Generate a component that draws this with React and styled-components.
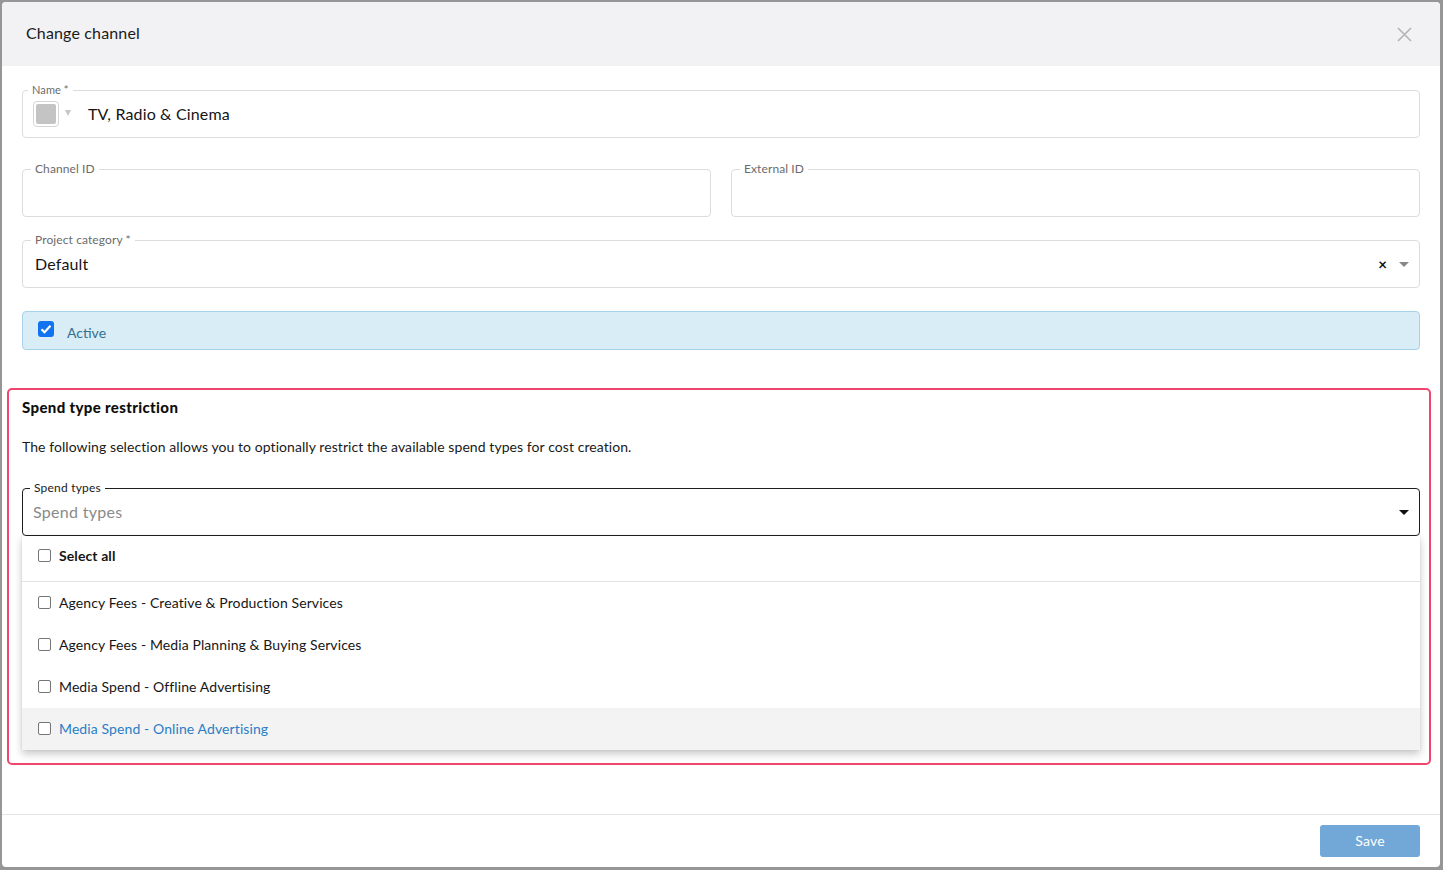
import React from "react";
import styled, { createGlobalStyle } from "styled-components";

const Global = createGlobalStyle`
  html, body { margin: 0; padding: 0; }
  body {
    background: #969696;
    font-family: Lato, "Open Sans", "Liberation Sans", sans-serif;
    color: #1d1d1d;
  }
  * { box-sizing: border-box; }
`;

const Page = styled.div`
  width: 1443px;
  height: 870px;
  padding: 2px 3px 3px 2px;
`;

const Modal = styled.div`
  width: 1438px;
  height: 865px;
  background: #fff;
  border-radius: 4px;
  display: flex;
  flex-direction: column;
  overflow: hidden;
`;

const Header = styled.div`
  height: 64px;
  flex: none;
  background: #f2f2f4;
  display: flex;
  align-items: center;
  justify-content: space-between;
  padding: 0 28px 0 24px;
`;

const Title = styled.div`
  font-size: 16px;
  letter-spacing: 0.15px;
  color: #1a1a1a;
  margin-top: -4px;
`;

const CloseBtn = styled.button`
  border: 0;
  background: none;
  padding: 0;
  width: 16px;
  height: 16px;
  display: flex;
  align-items: center;
  justify-content: center;
  cursor: pointer;
`;

const Body = styled.div`
  flex: 1;
  padding: 24px 20px 0 20px;
  display: flex;
  flex-direction: column;
`;

const Field = styled.div`
  position: relative;
  height: 48px;
  border: 1px solid ${(p) => (p.$dark ? "#1e1e1e" : "#dcdcdc")};
  border-radius: 4px;
  display: flex;
  align-items: center;
  padding: 0 ${(p) => p.$padR || 12}px 2px ${(p) => p.$padL || 12}px;
  margin-top: ${(p) => p.$mt || 0}px;
  flex: ${(p) => (p.$grow ? 1 : "none")};
`;

const Legend = styled.span`
  position: absolute;
  top: -8px;
  left: ${(p) => p.$left || 8}px;
  padding: 0 4px;
  background: #fff;
  font-size: ${(p) => p.$size || 12}px;
  letter-spacing: ${(p) => (p.$dark ? 0.2 : 0.1)}px;
  line-height: 14px;
  color: ${(p) => (p.$dark ? "#1a1a1a" : "#6b6b6b")};
`;

const Row = styled.div`
  display: flex;
  gap: 20px;
  margin-top: ${(p) => p.$mt || 0}px;
`;

const Swatch = styled.span`
  width: 26px;
  height: 26px;
  border-radius: 4px;
  border: 1px solid #d6d6d6;
  padding: 2px;
  display: flex;
  background: #fff;
  margin-top: 2px;
  & > span {
    flex: 1;
    background: #c4c4c4;
    border-radius: 2px;
  }
`;

const SmallCaret = styled.span`
  width: 0;
  height: 0;
  border-left: 3.5px solid transparent;
  border-right: 3.5px solid transparent;
  border-top: 6px solid ${(p) => p.$color || "#c6c6c6"};
  margin-left: ${(p) => p.$ml || 0}px;
`;

const Caret = styled.span`
  width: 0;
  height: 0;
  border-left: 5px solid transparent;
  border-right: 5px solid transparent;
  border-top: 5px solid ${(p) => p.$color || "#888"};
  margin-top: 2px;
`;

const Value = styled.span`
  font-size: 16px;
  letter-spacing: ${(p) => (p.$placeholder ? 0.3 : 0.15)}px;
  color: ${(p) => (p.$placeholder ? "#8a8a8a" : "#151515")};
  margin-left: ${(p) => p.$ml || 0}px;
  flex: 1;
`;

const Clear = styled.span`
  font-size: 15px;
  font-weight: 700;
  color: #111;
  margin: 2px 12px 0 0;
  line-height: 1;
`;

const Alert = styled.label`
  margin-top: 23px;
  height: 39px;
  background: #d9edf7;
  border: 1px solid #a6d2ea;
  border-radius: 4px;
  display: flex;
  align-items: center;
  padding: 0 0 0 15px;
  gap: 13px;
  font-size: 14px;
  color: #31708f;
  & > span:last-child {
    padding-top: 3px;
  }
`;

const BlueCheck = styled.span`
  width: 16px;
  height: 16px;
  border-radius: 3px;
  background: #1173f0;
  display: flex;
  align-items: center;
  justify-content: center;
  margin-top: -3px;
`;

const Section = styled.section`
  margin: 38px -11px 0 -15px;
  border: 2px solid #ef466d;
  border-radius: 5px;
  padding: 7px 9px 13px 13px;
  display: flex;
  flex-direction: column;
`;

const SectionTitle = styled.h3`
  margin: 0;
  font-size: 15px;
  line-height: 20px;
  font-weight: 900;
  letter-spacing: 0.35px;
  color: #0e0e0e;
`;

const Desc = styled.p`
  margin: 22px 0 0;
  font-size: 14px;
  line-height: 16px;
  letter-spacing: 0.07px;
  color: #1a1a1a;
`;

const Menu = styled.div`
  background: #fff;
  box-shadow: 0 4px 8px rgba(0, 0, 0, 0.22), 0 0 2px rgba(0, 0, 0, 0.08);
  display: flex;
  flex-direction: column;
`;

const Option = styled.label`
  height: ${(p) => (p.$all ? 46 : 42)}px;
  display: flex;
  align-items: center;
  gap: 8px;
  padding: ${(p) => (p.$all ? "0 0 6px 16px" : "0 0 1px 16px")};
  font-size: 14px;
  letter-spacing: 0.1px;
  font-weight: ${(p) => (p.$all ? 700 : 400)};
  color: ${(p) => (p.$active ? "#2a7ec6" : "#161616")};
  background: ${(p) => (p.$active ? "#f3f3f3" : "#fff")};
  border-bottom: ${(p) => (p.$all ? "1px solid #e2e2e2" : "0")};
`;

const Box = styled.span`
  width: 13px;
  height: 13px;
  border: 1px solid #767676;
  border-radius: 2px;
  background: #fff;
  flex: none;
`;

const Spacer = styled.div`
  flex: 1;
`;

const Footer = styled.div`
  flex: none;
  border-top: 1px solid #e4e4e4;
  padding: 10px 20px 10px;
  display: flex;
  justify-content: flex-end;
`;

const SaveBtn = styled.button`
  width: 100px;
  height: 32px;
  border: 0;
  border-radius: 3px;
  background: #72a8d8;
  color: #fff;
  font-family: inherit;
  font-size: 14px;
  letter-spacing: 0.2px;
  padding-bottom: 2px;
  cursor: pointer;
`;

const options = [
  "Agency Fees - Creative & Production Services",
  "Agency Fees - Media Planning & Buying Services",
  "Media Spend - Offline Advertising",
  "Media Spend - Online Advertising",
];

export default function App() {
  return (
    <>
      <Global />
      <Page>
        <Modal>
          <Header>
            <Title>Change channel</Title>
            <CloseBtn aria-label="Close">
              <svg width="15" height="15" viewBox="0 0 15 15">
                <path d="M1 1L14 14M14 1L1 14" stroke="#b4b4b4" strokeWidth="1.6" />
              </svg>
            </CloseBtn>
          </Header>
          <Body>
            <Field $padL={10}>
              <Legend $size={11} $left={5}>Name *</Legend>
              <Swatch>
                <span />
              </Swatch>
              <SmallCaret $ml={6} />
              <Value $ml={17}>TV, Radio &amp; Cinema</Value>
            </Field>
            <Row $mt={31}>
              <Field $grow>
                <Legend>Channel ID</Legend>
              </Field>
              <Field $grow>
                <Legend>External ID</Legend>
              </Field>
            </Row>
            <Field $mt={23} $padR={10}>
              <Legend>Project category *</Legend>
              <Value>Default</Value>
              <Clear>×</Clear>
              <Caret />
            </Field>
            <Alert>
              <BlueCheck>
                <svg width="12" height="10" viewBox="0 0 12 10">
                  <path d="M1.5 5.2L4.5 8.2L10.5 1.8" stroke="#fff" strokeWidth="2.2" fill="none" />
                </svg>
              </BlueCheck>
              <span>Active</span>
            </Alert>
            <Section>
              <SectionTitle>Spend type restriction</SectionTitle>
              <Desc>
                The following selection allows you to optionally restrict the available spend types for cost creation.
              </Desc>
              <Field $dark $mt={33} $padL={10} $padR={10}>
                <Legend $dark $left={7}>Spend types</Legend>
                <Value $placeholder>Spend types</Value>
                <Caret $color="#111" />
              </Field>
              <Menu>
                <Option $all>
                  <Box />
                  <span>Select all</span>
                </Option>
                {options.map((o, i) => (
                  <Option key={o} $active={i === options.length - 1}>
                    <Box />
                    <span>{o}</span>
                  </Option>
                ))}
              </Menu>
            </Section>
            <Spacer />
          </Body>
          <Footer>
            <SaveBtn>Save</SaveBtn>
          </Footer>
        </Modal>
      </Page>
    </>
  );
}
